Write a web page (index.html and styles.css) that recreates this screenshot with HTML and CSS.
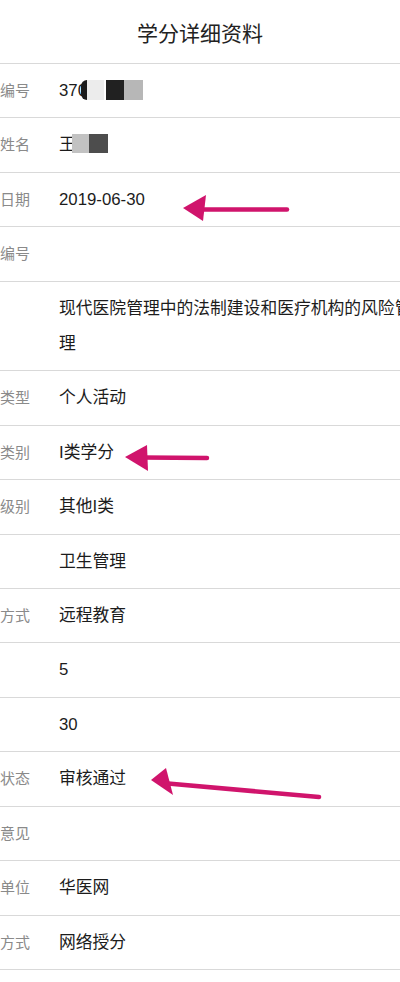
FILE: index.html
```html
<!DOCTYPE html>
<html>
<head>
  <meta charset="utf-8">
  <title>学分详细资料</title>
  <meta name="viewport" content="width=device-width, initial-scale=1">
  <link rel="stylesheet" href="styles.css">
</head>

<body>

  <div class="sheet">
	<header class="title">学分详细资料</header>

	<ul class="rows">
	  <li><span class="label">学分编号</span><span class="value">370<span class="mask">
		<i class="m-dot"></i><i class="m-light"></i><i class="m-dark"></i><i class="m-grey"></i></span></span></li>
	  <li><span class="label">姓名</span><span class="value">王<span class="mask mask-name">
		<i class="m-mid"></i><i class="m-deep"></i></span></span></li>
	  <li><span class="label">获得日期</span><span class="value">2019-06-30</span></li>
	  <li><span class="label">项目编号</span><span class="value"></span></li>
	  <li><span class="label"></span><span class="value">现代医院管理中的法制建设和医疗机构的风险管理</span></li>
	  <li><span class="label">项目类型</span><span class="value">个人活动</span></li>
	  <li><span class="label">学分类别</span><span class="value">I类学分</span></li>
	  <li><span class="label">项目级别</span><span class="value">其他I类</span></li>
	  <li><span class="label"></span><span class="value">卫生管理</span></li>
	  <li><span class="label">教育方式</span><span class="value">远程教育</span></li>
	  <li><span class="label"></span><span class="value">5</span></li>
	  <li><span class="label"></span><span class="value">30</span></li>
	  <li><span class="label">审核状态</span><span class="value">审核通过</span></li>
	  <li><span class="label">审核意见</span><span class="value"></span></li>
	  <li><span class="label">授予单位</span><span class="value">华医网</span></li>
	  <li><span class="label">授予方式</span><span class="value">网络授分</span></li>
	  <li><span class="label"></span><span class="value"></span></li>
	</ul>
  </div>

  <!-- hand drawn arrows laid over the list -->
  <svg class="marks" width="400" height="982" viewBox="0 0 400 982">
	<g stroke="#d0146c" stroke-width="4.5" stroke-linecap="round" fill="none">
	  <line x1="200" y1="209.5" x2="287" y2="209.5"/>
	  <line x1="142" y1="457.5" x2="207" y2="458"/>
	  <line x1="168" y1="783.5" x2="319" y2="797"/>
	</g>
	<g fill="#d0146c">
	  <polygon points="183,208 206,195 203,221"/>
	  <polygon points="125,457 147,445 148,471"/>
	  <polygon points="151,780 166,768 173,795"/>
	</g>
  </svg>

</body>
</html>
```

FILE: styles.css
```css
html, body {
  margin: 0;
  padding: 0;
  background: #fff;
}

body {
  position: relative;
  width: 400px;
  height: 982px;
  overflow: hidden;
  font-family: "Liberation Sans", "Noto Sans CJK SC", sans-serif;
  color: #1c1c1c;
}

/* the page is wider than the window, cropped on both sides */
.sheet {
  width: 462px;
  margin-left: -31px;
}

.title {
  height: 63px;
  display: flex;
  align-items: center;
  justify-content: center;
  font-size: 21px;
  color: #222;
  border-bottom: 1px solid #d9d9d9;
}

.rows {
  list-style: none;
  margin: 0;
  padding: 0;
}

.rows li {
  display: flex;
  padding: 9px 12px 9px 0;
  line-height: 35.4px;
  border-bottom: 1px solid #d9d9d9;
}

.label {
  flex: 0 0 61px;
  font-size: 15px;
  color: #8a8a8a;
  text-align: right;
  white-space: nowrap;
  overflow: hidden;
  direction: rtl;
  margin-right: 29px;
}

.value {
  flex: 1;
  min-height: 35.4px;
  font-size: 16.8px;
}

.mask {
  display: inline-flex;
  vertical-align: middle;
  height: 20px;
  margin-left: -6px;
  position: relative;
  top: -2px;
}

.mask i {
  display: block;
  height: 100%;
}

.m-dot {
  width: 6px;
  background: #1b1b1b;
  border-radius: 6px 0 0 6px;
}

.m-light {
  width: 17px;
  background: #ececec;
}

.m-dark {
  width: 18px;
  margin-left: 2px;
  background: #212121;
}

.m-grey {
  width: 19px;
  background: #b7b7b7;
}

.mask-name {
  margin-left: -4px;
  height: 19px;
}

.m-mid {
  width: 17px;
  background: #c2c2c2;
}

.m-deep {
  width: 19px;
  background: #4d4d4d;
}

.marks {
  position: absolute;
  top: 0;
  left: 0;
}
```
